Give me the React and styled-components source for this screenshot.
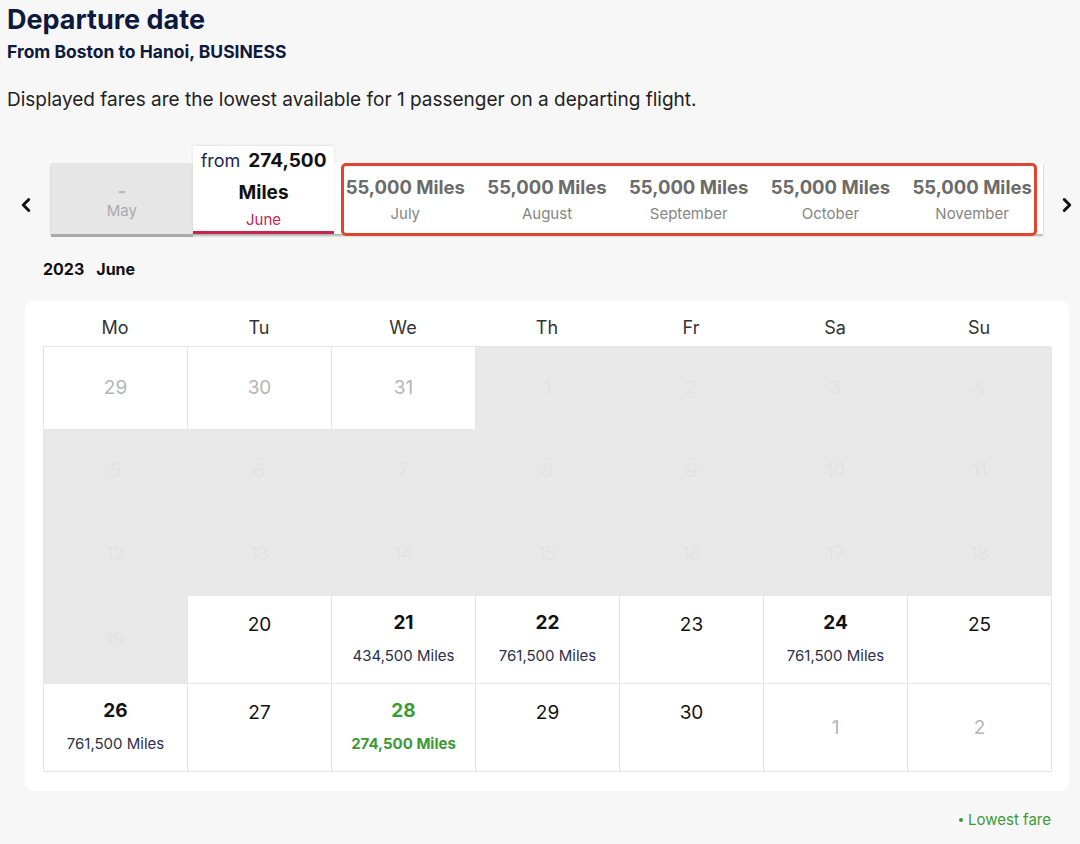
import React from 'react';
import styled, { createGlobalStyle } from 'styled-components';
import { ChevronLeft, ChevronRight } from 'lucide-react';

const GlobalStyle = createGlobalStyle`
    body {
        margin: 0;
        background-color: #f7f7f8;
        font-family: "Inter", "Liberation Sans", sans-serif;
        color: #111;
    }
`;

const Page = styled.div`
    width: 1080px;
    min-height: 844px;
`;

const Header = styled.div`
    padding: 4px 7px 0;
`;

const Title = styled.h1`
    margin: 0;
    font-size: 27px;
    line-height: 32px;
    font-weight: 700;
    color: #0e1a3d;
`;

const Subtitle = styled.div`
    margin-top: 6px;
    font-size: 17.5px;
    line-height: 20px;
    font-weight: 700;
    color: #0e1a3d;
`;

const Intro = styled.p`
    margin: 26px 0 0;
    font-size: 19px;
    line-height: 24px;
    color: #222;
`;

const MonthRow = styled.div`
    display: grid;
    grid-template-columns: 51px 992px 37px;
    align-items: center;
    margin-top: 51px;
`;

const Arrow = styled.button`
    display: flex;
    align-items: center;
    justify-content: ${props => props.side === 'right' ? 'flex-end' : 'center'};
    padding: 13px ${props => props.side === 'right' ? '2px' : '0'} 0 0;
    border: none;
    background: none;
    color: #111;
    cursor: pointer;
`;

const Strip = styled.div`
    position: relative;
    display: grid;
    grid-template-columns: repeat(7, 1fr);
    height: 71px;
    background-color: #fff;
    box-shadow: 0 2px 2px rgba(0, 0, 0, 0.28);
`;

const Tab = styled.div`
    display: flex;
    flex-direction: column;
    align-items: center;
    justify-content: center;
    padding-top: 2px;
    background-color: ${props => props.disabled ? '#e6e6e6' : '#fff'};
    box-shadow: ${props => props.disabled ? '0 3px 0 #a9a9a9' : 'none'};
`;

const ActiveTab = styled.div`
    display: flex;
    flex-direction: column;
    align-items: center;
    margin-top: -17px;
    height: 88px;
    box-sizing: border-box;
    padding-top: 2px;
    background-color: #fff;
    border-bottom: 3px solid #c8254a;
    box-shadow: 0 -1px 3px rgba(0, 0, 0, 0.08);
    z-index: 1;
`;

const FromLine = styled.div`
    font-size: 18px;
    line-height: 26px;
    color: #1d2550;
    b {
        margin-left: 8px;
        font-size: 19px;
        color: #111;
    }
`;

const ActiveMiles = styled.div`
    margin-top: 7px;
    font-size: 19px;
    line-height: 24px;
    font-weight: 700;
    color: #111;
`;

const ActiveMonth = styled.div`
    margin-top: 5px;
    font-size: 15px;
    line-height: 20px;
    color: #c8254a;
`;

const TabPrice = styled.div`
    font-size: 18.5px;
    line-height: 24px;
    font-weight: 700;
    color: ${props => props.disabled ? '#b8b8b8' : '#6b6b6b'};
    margin-top: ${props => props.disabled ? '0' : '0'};
`;

const TabMonth = styled.div`
    margin-top: ${props => props.disabled ? '-2px' : '5px'};
    font-size: 15px;
    line-height: 20px;
    color: ${props => props.disabled ? '#aaa' : '#858585'};
`;

const Highlight = styled.div`
    position: absolute;
    left: 290px;
    top: 0;
    width: 696px;
    height: 73px;
    box-sizing: border-box;
    border: 3px solid #e2452f;
    border-radius: 5px;
    pointer-events: none;
`;

const MonthLabel = styled.div`
    margin: 25px 0 0 43px;
    font-size: 16px;
    line-height: 20px;
    font-weight: 700;
    color: #111;
    span {
        margin-left: 12px;
    }
`;

const Card = styled.div`
    margin: 22px 11px 0 25px;
    padding: 0 18px 19px;
    background-color: #fff;
    border-radius: 8px;
`;

const WeekHeader = styled.div`
    display: grid;
    grid-template-columns: repeat(7, 144px);
    height: 45px;
    align-items: center;
`;

const WeekDay = styled.div`
    text-align: center;
    font-size: 18px;
    color: #333;
    padding-top: 7px;
`;

const Grid = styled.div`
    display: grid;
    grid-template-columns: repeat(7, 144px);
    grid-template-rows: 83px 83px 83px 88px 88px;
    border-top: 1px solid #e6e6e6;
    border-left: 1px solid #e6e6e6;
`;

const Cell = styled.div`
    display: flex;
    flex-direction: column;
    align-items: center;
    justify-content: ${props => props.centered ? 'center' : 'flex-start'};
    box-sizing: border-box;
    padding-top: ${props => props.centered ? '0' : props.priced ? '15px' : '17px'};
    background-color: ${props => props.disabled ? '#e8e8e8' : '#fff'};
    border-right: 1px solid ${props => props.disabled ? '#e8e8e8' : '#e6e6e6'};
    border-bottom: 1px solid ${props => props.disabled ? '#e8e8e8' : '#e6e6e6'};
`;

const DayNumber = styled.div`
    font-size: 19px;
    line-height: 24px;
    font-weight: ${props => props.bold ? 700 : 400};
    color: ${props => props.tone === 'muted' ? '#b5b5b5'
        : props.tone === 'disabled' ? '#e3e3e3'
        : props.tone === 'lowest' ? '#3c9a35'
        : '#111'};
`;

const DayPrice = styled.div`
    margin-top: 11px;
    font-size: 15px;
    line-height: 20px;
    font-weight: ${props => props.lowest ? 700 : 400};
    color: ${props => props.lowest ? '#3c9a35' : '#2a2f4a'};
`;

const Legend = styled.div`
    display: flex;
    justify-content: flex-end;
    align-items: center;
    gap: 5px;
    margin: 19px 29px 0 0;
    font-size: 15px;
    color: #3c9a35;
    &::before {
        content: '';
        width: 4px;
        height: 4px;
        border-radius: 50%;
        background-color: #3c9a35;
    }
`;

const otherMonths = ['July', 'August', 'September', 'October', 'November'];
const weekDays = ['Mo', 'Tu', 'We', 'Th', 'Fr', 'Sa', 'Su'];

const prices = {
    21: '434,500 Miles',
    22: '761,500 Miles',
    24: '761,500 Miles',
    26: '761,500 Miles',
    28: '274,500 Miles',
};

const buildDays = () => {
    const days = [29, 30, 31].map(d => ({ day: d, state: 'muted' }));
    for (let d = 1; d <= 30; d++) {
        days.push({ day: d, state: d < 20 ? 'disabled' : 'active', price: prices[d], lowest: d === 28 });
    }
    days.push({ day: 1, state: 'muted' }, { day: 2, state: 'muted' });
    return days;
};

const App = () => {
    const days = buildDays();

    return (
        <Page>
            <GlobalStyle />
            <Header>
                <Title>Departure date</Title>
                <Subtitle>From Boston to Hanoi, BUSINESS</Subtitle>
                <Intro>Displayed fares are the lowest available for 1 passenger on a departing flight.</Intro>
            </Header>

            <MonthRow>
                <Arrow><ChevronLeft size={22} strokeWidth={3.2} /></Arrow>
                <Strip>
                    <Tab disabled>
                        <TabPrice disabled>-</TabPrice>
                        <TabMonth disabled>May</TabMonth>
                    </Tab>
                    <ActiveTab>
                        <FromLine>from<b>274,500</b></FromLine>
                        <ActiveMiles>Miles</ActiveMiles>
                        <ActiveMonth>June</ActiveMonth>
                    </ActiveTab>
                    {otherMonths.map(month => (
                        <Tab key={month}>
                            <TabPrice>55,000 Miles</TabPrice>
                            <TabMonth>{month}</TabMonth>
                        </Tab>
                    ))}
                    <Highlight />
                </Strip>
                <Arrow side="right"><ChevronRight size={22} strokeWidth={3.2} /></Arrow>
            </MonthRow>

            <MonthLabel>2023<span>June</span></MonthLabel>

            <Card>
                <WeekHeader>
                    {weekDays.map(d => <WeekDay key={d}>{d}</WeekDay>)}
                </WeekHeader>
                <Grid>
                    {days.map((d, i) => (
                        <Cell
                            key={i}
                            disabled={d.state === 'disabled'}
                            centered={d.state !== 'active'}
                            priced={!!d.price}
                        >
                            <DayNumber
                                bold={!!d.price}
                                tone={d.state === 'active' ? (d.lowest ? 'lowest' : 'normal') : d.state}
                            >
                                {d.day}
                            </DayNumber>
                            {d.price && <DayPrice lowest={d.lowest}>{d.price}</DayPrice>}
                        </Cell>
                    ))}
                </Grid>
            </Card>

            <Legend>Lowest fare</Legend>
        </Page>
    );
};

export default App;
